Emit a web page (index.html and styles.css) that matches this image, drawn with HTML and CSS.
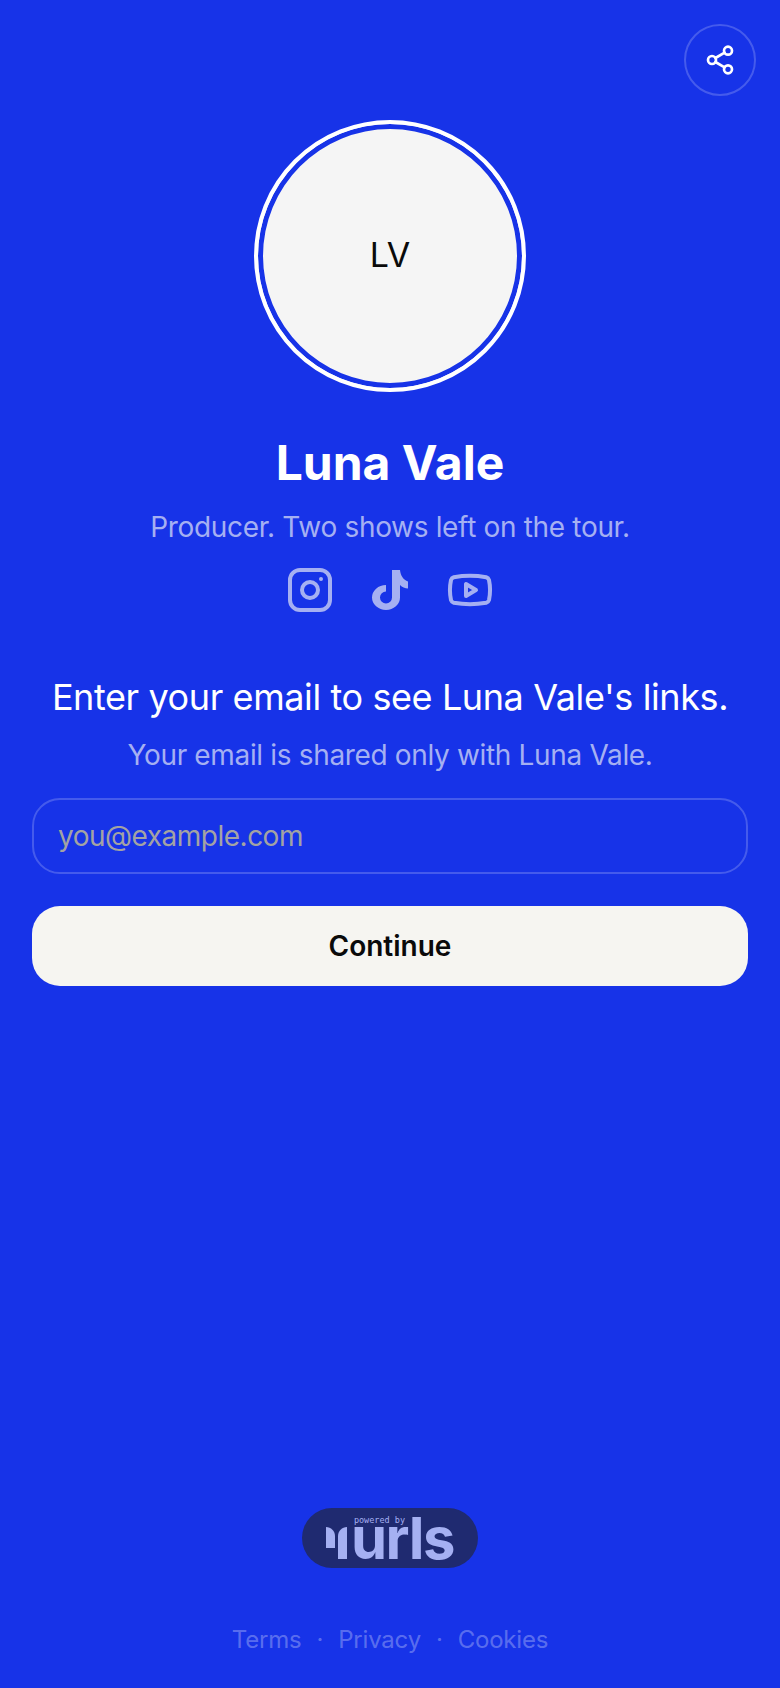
FILE: index.html
```html
<!DOCTYPE html>
<html lang="en">
<head>
  <meta charset="UTF-8" />
  <meta name="viewport" content="width=device-width, initial-scale=1.0"/>
  <title>Luna Vale</title>
  <link rel="stylesheet" href="styles.css">
</head>
<body>
  <div class="page">
    <div class="top-bar">
      <button class="share-btn" aria-label="Share">
        <svg class="share-icon" viewBox="0 0 24 24" fill="none" stroke="currentColor" stroke-width="2" stroke-linecap="round" stroke-linejoin="round">
          <circle cx="18" cy="5" r="3"/>
          <circle cx="6" cy="12" r="3"/>
          <circle cx="18" cy="19" r="3"/>
          <path d="M8.59 13.51l6.83 3.98"/>
          <path d="M15.41 6.51l-6.82 3.98"/>
        </svg>
      </button>
    </div>

    <div class="avatar"><span>LV</span></div>

    <h1 class="name">Luna Vale</h1>
    <p class="bio">Producer. Two shows left on the tour.</p>

    <div class="socials">
      <svg class="social-icon" viewBox="0 0 24 24" fill="none" stroke="currentColor" stroke-width="2" stroke-linecap="round" stroke-linejoin="round">
        <rect x="2" y="2" width="20" height="20" rx="5"/>
        <circle cx="12" cy="12" r="4"/>
        <path d="M17.5 6.5h.01"/>
      </svg>
      <svg class="social-icon" viewBox="0 0 48 48" fill="currentColor">
        <path d="M26 4H34C34.500 9.500 37.500 14 42 15.500V22.500C39 22.500 36 21 34 19V31.500A14 12.500 0 1 1 20 19V25.500A6 6 0 1 0 26 31.500Z"/>
      </svg>
      <svg class="social-icon" viewBox="0 0 24 24" fill="none" stroke="currentColor" stroke-width="2" stroke-linecap="round" stroke-linejoin="round">
        <path d="M2.500 17a24.120 24.120 0 0 1 0-10 2 2 0 0 1 1.400-1.400 49.560 49.560 0 0 1 16.200 0A2 2 0 0 1 21.500 7a24.120 24.120 0 0 1 0 10 2 2 0 0 1-1.400 1.400 49.550 49.550 0 0 1-16.200 0A2 2 0 0 1 2.500 17"/>
        <path d="m10 15 5-3-5-3z"/>
      </svg>
    </div>

    <h2 class="gate-title">Enter your email to see Luna Vale's links.</h2>
    <p class="gate-note">Your email is shared only with Luna Vale.</p>

    <form class="gate-form">
      <input class="email-input" type="email" placeholder="you@example.com" />
      <button class="continue-btn" type="button">Continue</button>
    </form>

    <a class="badge" href="#">
      <svg class="badge-mark" viewBox="0 0 21 32">
        <path d="M0 0C5 0 9 4 9 9V21H0Z"/>
        <path d="M21 0C16 0 12 4 12 9V32H21Z"/>
      </svg>
      <span class="badge-text">
        <span class="badge-small">powered by</span>
        <span class="badge-word">urls</span>
      </span>
    </a>

    <div class="footer-links">
      <a href="#">Terms</a>
      <span>·</span>
      <a href="#">Privacy</a>
      <span>·</span>
      <a href="#">Cookies</a>
    </div>
  </div>
</body>
</html>
```

FILE: styles.css
```css
:root {
  --blue: #1733e8;
  --paper: #f6f5f1;
  --soft: #a5b0f2;
  --font: 'Inter', sans-serif;
}

* {
  box-sizing: border-box;
}

body {
  margin: 0;
  background-color: var(--blue);
  font-family: var(--font);
  color: #ffffff;
}

.page {
  min-height: 1688px;
  padding: 24px 24px 0;
  display: flex;
  flex-direction: column;
  align-items: center;
  overflow: hidden;
}

.top-bar {
  width: 100%;
  display: flex;
  justify-content: flex-end;
}

.share-btn {
  width: 72px;
  height: 72px;
  border-radius: 50%;
  border: 2px solid rgba(255, 255, 255, 0.2);
  background: none;
  color: #ffffff;
  padding: 0;
  display: flex;
  align-items: center;
  justify-content: center;
}

.share-icon {
  width: 32px;
  height: 32px;
}

.avatar {
  width: 272px;
  height: 272px;
  margin-top: 24px;
  padding-bottom: 4px;
  border-radius: 50%;
  background: #f5f5f5;
  border: 4px solid #ffffff;
  box-shadow: inset 0 0 0 5px var(--blue);
  display: flex;
  align-items: center;
  justify-content: center;
  color: #0a0a0a;
  font-size: 34px;
}

.name {
  margin: 41px 0 0;
  font-size: 48px;
  line-height: 60px;
  font-weight: 700;
}

.bio {
  margin: 14px 0 0;
  font-size: 28px;
  line-height: 40px;
  letter-spacing: -0.33px;
  color: var(--soft);
}

.socials {
  margin-top: 19px;
  display: flex;
  gap: 32px;
  color: var(--soft);
}

.social-icon {
  width: 48px;
  height: 48px;
}

.gate-title {
  margin: 61px 0 0;
  font-size: 36px;
  line-height: 44px;
  font-weight: 400;
  letter-spacing: -0.4px;
  white-space: nowrap;
}

.gate-note {
  margin: 16px 0 0;
  font-size: 28px;
  line-height: 40px;
  letter-spacing: -0.34px;
  color: var(--soft);
}

.gate-form {
  width: 100%;
  margin-top: 23px;
  padding: 0 8px;
  display: flex;
  flex-direction: column;
  gap: 32px;
}

.email-input {
  width: 100%;
  height: 76px;
  padding: 0 24px;
  border: 2px solid rgba(255, 255, 255, 0.2);
  border-radius: 28px;
  background: none;
  color: #ffffff;
  font-family: var(--font);
  font-size: 28px;
  letter-spacing: -0.5px;
}

.email-input::placeholder {
  color: #a3a3a3;
  opacity: 1;
}

.continue-btn {
  height: 80px;
  border: none;
  border-radius: 28px;
  background: var(--paper);
  color: #0a0a0a;
  font-family: var(--font);
  font-size: 28px;
  font-weight: 600;
}

.badge {
  margin-top: auto;
  width: 176px;
  height: 60px;
  padding-top: 8px;
  border-radius: 30px;
  background: #1f2a70;
  color: var(--soft);
  text-decoration: none;
  display: flex;
  align-items: flex-start;
  justify-content: center;
  gap: 4px;
}

.badge-mark {
  width: 21px;
  height: 32px;
  margin-top: 11px;
  fill: var(--soft);
}

.badge-text {
  display: block;
}

.badge-small {
  display: block;
  padding-left: 3px;
  font-family: 'DejaVu Sans Mono', monospace;
  font-size: 8.500px;
  line-height: 8px;
  white-space: nowrap;
}

.badge-word {
  display: block;
  font-size: 58px;
  line-height: 28px;
  font-weight: 700;
  letter-spacing: -1.4px;
}

.footer-links {
  margin-top: 56px;
  margin-bottom: 32px;
  display: flex;
  gap: 15px;
  font-size: 24px;
  line-height: 32px;
  letter-spacing: -0.2px;
  color: rgba(255, 255, 255, 0.3);
}

.footer-links a {
  color: inherit;
  text-decoration: none;
}
```
